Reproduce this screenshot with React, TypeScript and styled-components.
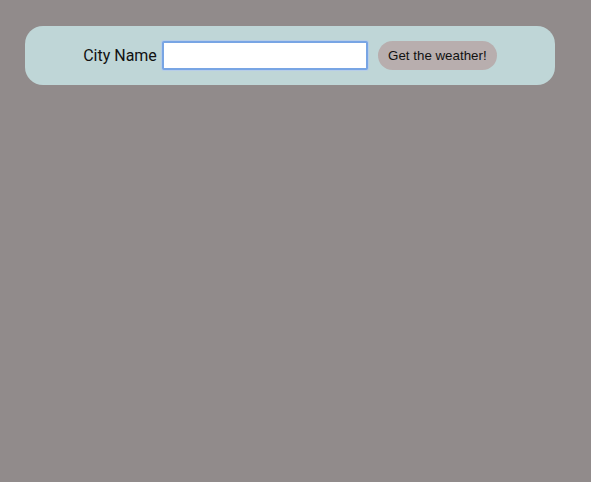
import React, { useEffect, useRef } from "react";
import styled, { createGlobalStyle } from "styled-components";

const Global = createGlobalStyle`
  html, body {
    margin: 0;
    padding: 0;
    background: #918b8b;
    height: 100%;
  }
  body {
    font-family: Roboto, "Liberation Sans", sans-serif;
  }
`;

const Page = styled.div`
  padding: 26px 36px 0 25px;
`;

const Panel = styled.form`
  height: 59px;
  background: #bfd6d7;
  border-radius: 18px;
  display: flex;
  align-items: center;
  justify-content: center;
  box-sizing: border-box;
`;

const Label = styled.label`
  font-family: Roboto, "Liberation Sans", sans-serif;
  font-size: 16px;
  color: #111;
  margin-right: 5px;
`;

const Input = styled.input`
  box-sizing: border-box;
  width: 206px;
  height: 29px;
  border: 2px solid #78a5e4;
  border-radius: 2px;
  background: #fff;
  font-size: 20px;
  padding: 0 2px;
  outline: none;
  caret-color: #000;
  box-shadow: 0 0 0 1px #b6cde8;
`;

const Button = styled.button`
  margin-left: 10px;
  height: 29px;
  width: 119px;
  border: none;
  border-radius: 15px;
  background: #b8aeae;
  color: #111;
  font-family: "Liberation Sans", Arial, sans-serif;
  font-size: 13.33px;
  padding: 0;
  cursor: pointer;
`;

export default function App() {
  const ref = useRef<HTMLInputElement>(null);
  useEffect(() => {
    ref.current?.focus();
  }, []);
  return (
    <>
      <Global />
      <Page>
        <Panel onSubmit={(e) => e.preventDefault()}>
          <Label htmlFor="city">City Name</Label>
          <Input id="city" ref={ref} type="text" autoFocus />
          <Button type="submit">Get the weather!</Button>
        </Panel>
      </Page>
    </>
  );
}
